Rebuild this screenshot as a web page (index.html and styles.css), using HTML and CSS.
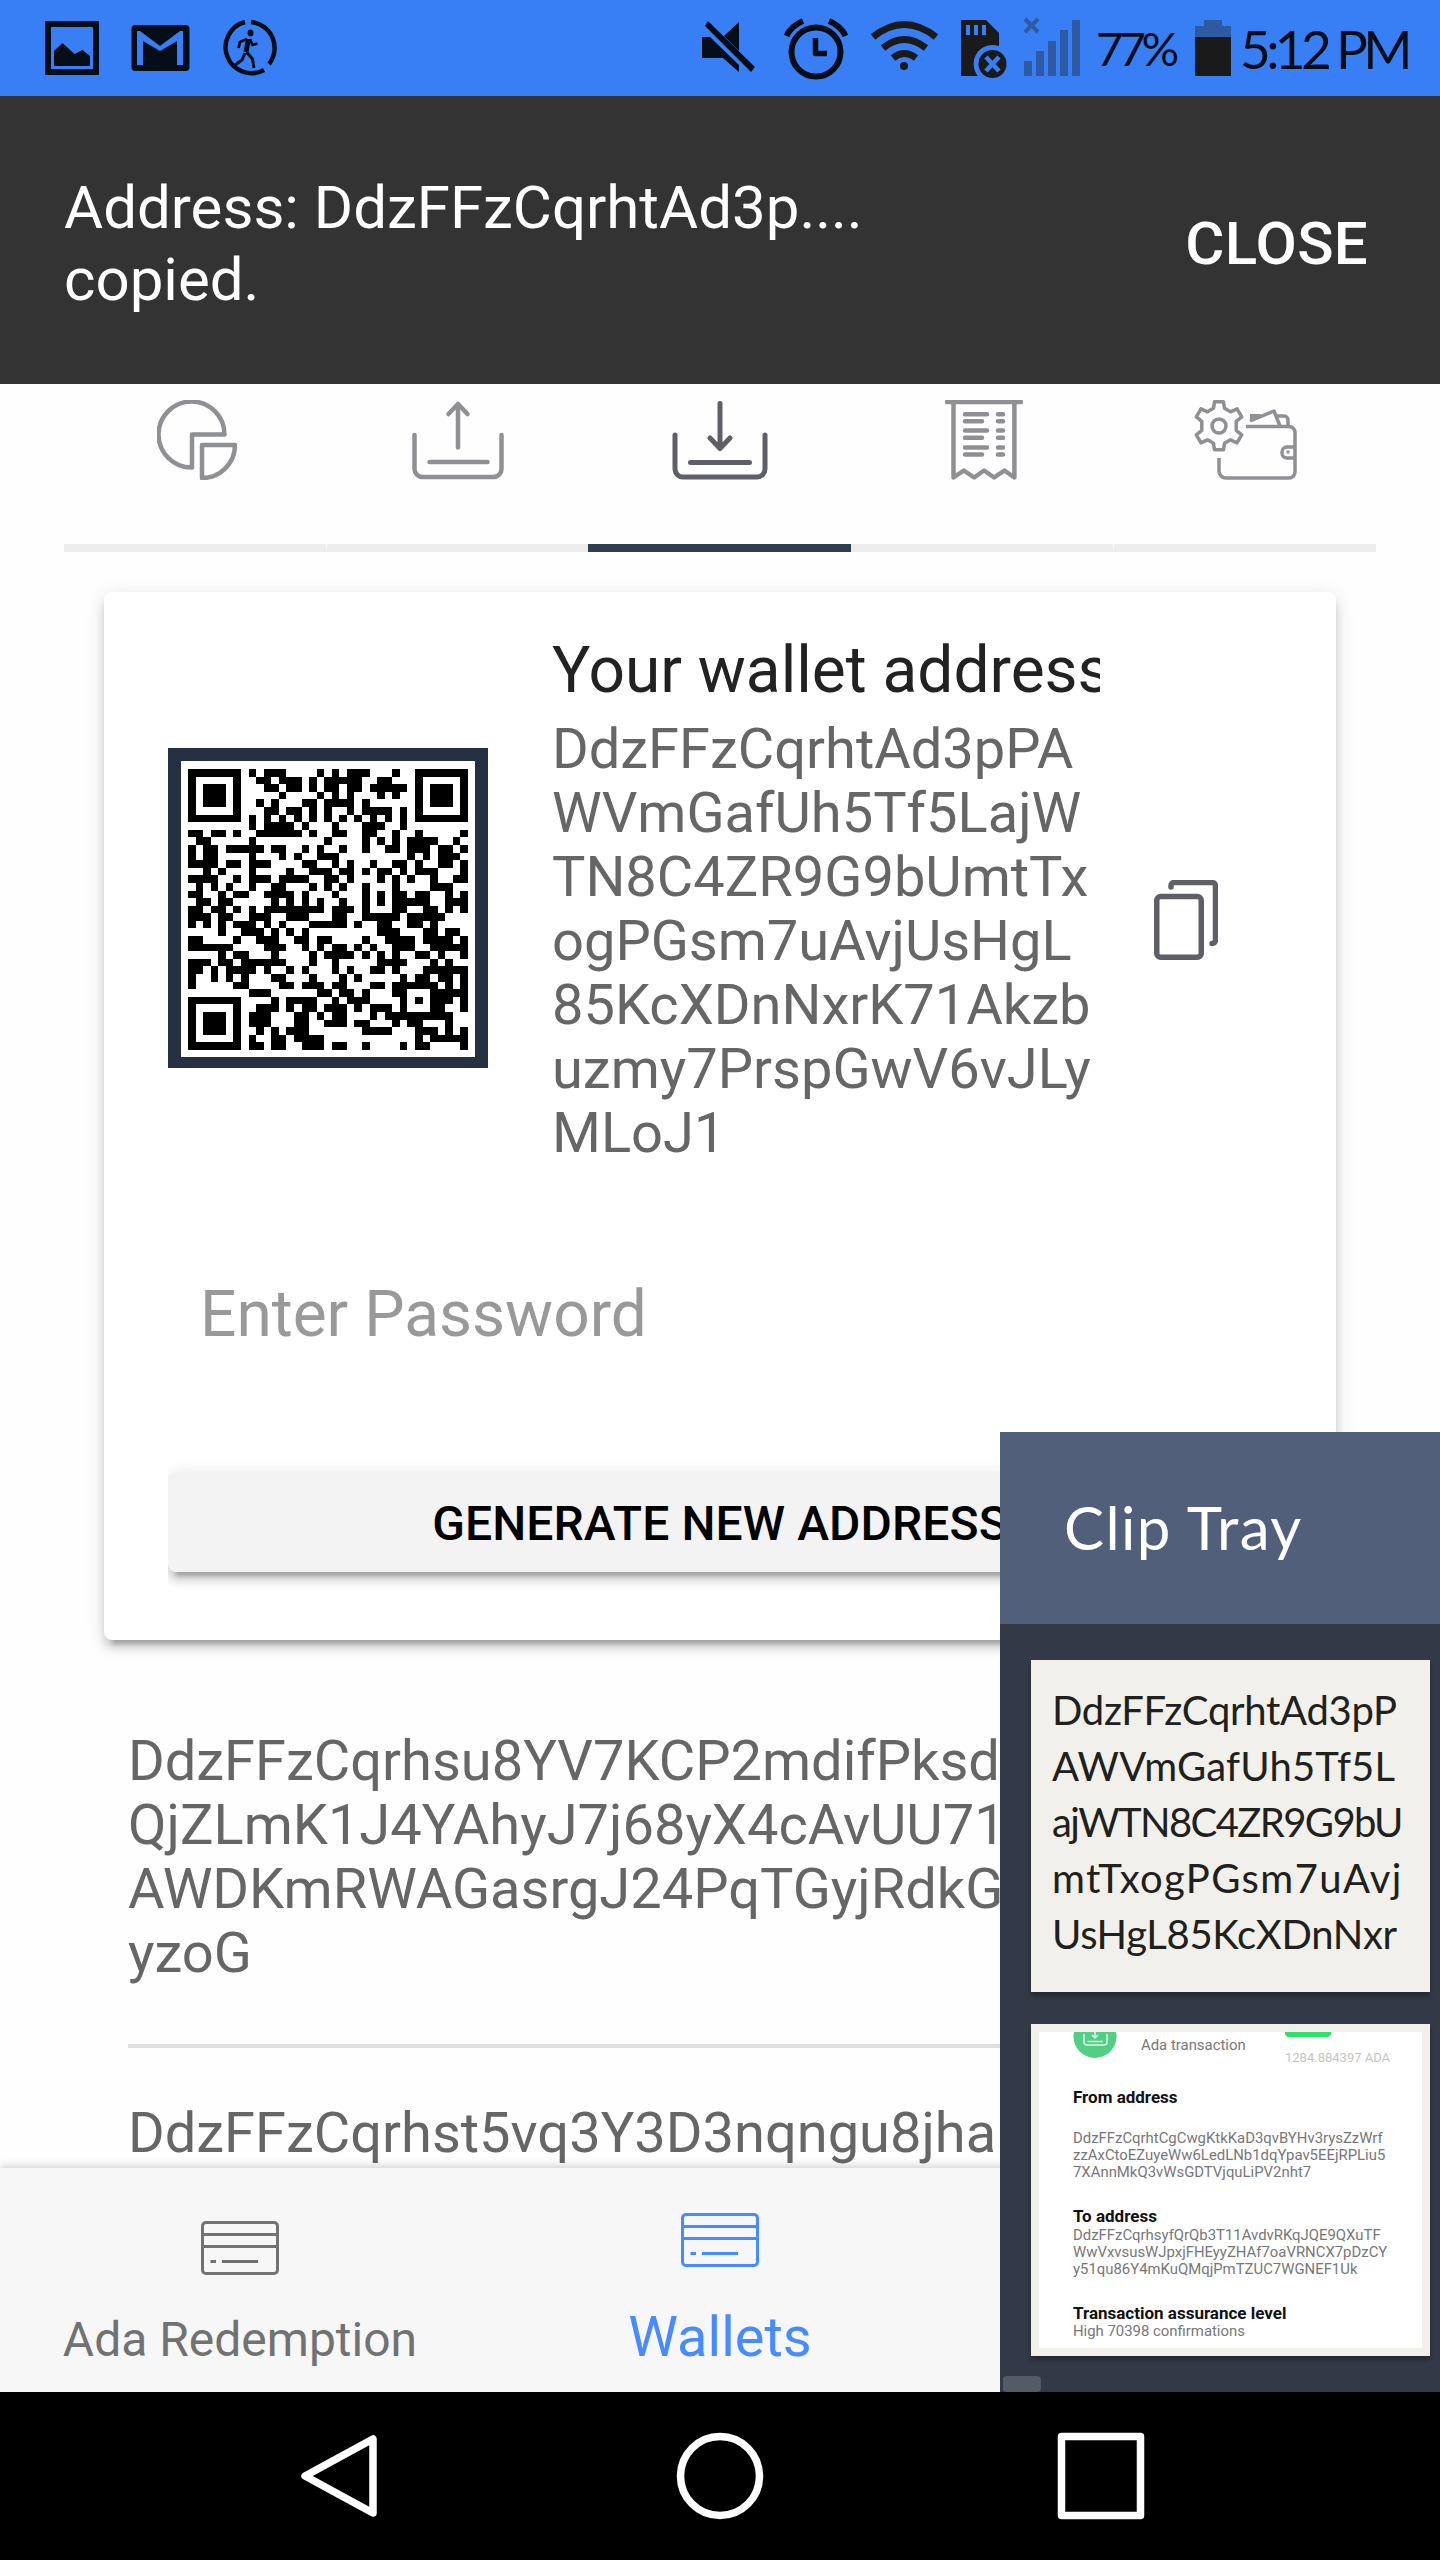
FILE: index.html
```html
<!DOCTYPE html>
<html lang="en">
<head>
<meta charset="utf-8">
<title>Wallet address</title>
<link rel="stylesheet" href="styles.css">
</head>
<body>
<div class="phone">
  <header class="status">
    <svg class="notices" viewBox="0 0 218 96" width="218" height="96">
      <path d="M45 21h54v54H45z M51 27v42h42V27z" fill-rule="evenodd"/>
      <path d="M54 51l8.500-8 12 11 8-4 7.500 6v10H54z"/>
      <path d="M135.500 25h50a4 4 0 0 1 4 4v38a4 4 0 0 1-4 4h-50a4 4 0 0 1-4-4V29a4 4 0 0 1 4-4z"/>
      <path class="cut" d="M137 65V31l3 0 20 15 20-15 3 0v34h-6V41L160 51 143 41v24z"/>
    </svg>
    <svg class="runner" viewBox="0 0 60 60" width="60" height="60">
      <path class="line" d="M33 4A26 26 0 0 1 51 46M46 52A26 26 0 1 1 27 4" stroke-width="4.500"/>
      <ellipse cx="32.500" cy="15" rx="3" ry="3.500"/>
      <path class="line" d="M29 21l-7 3-1.500 6M32 21l2.500 6 5-1.500" stroke-width="2.800"/>
      <path class="line" d="M30.500 21l-2.500 13" stroke-width="5"/>
      <path class="line" d="M28.500 34l6 7 1.500 9M27 35l-3 7-7 5" stroke-width="3"/>
    </svg>
    <svg class="system" viewBox="700 0 384 96" width="384" height="96">
      <path d="M739 22v29L724 36z"/>
      <path d="M702 37h8l29 35-16-14h-21z"/>
      <path d="M708 21l47 46-4 5L705 26zM702 37h8l29 28v7L724 58h-22z"/>
      <circle class="line" cx="816" cy="52" r="24.500" stroke-width="6"/>
      <path class="line" d="M815.500 38v15.500H827" stroke-width="5.500"/>
      <path class="line" d="M786.500 36Q791 26 803 21M845.500 36Q841 26 829 21" stroke-width="6"/>
      <g class="wifi">
        <path d="M873 37Q904 12 936 37M883 48Q904 31 926 48M893 58Q904 49 916 58"/>
        <circle cx="904" cy="66" r="4"/>
      </g>
      <g class="soft">
        <path d="M961 20h25l13 13v13A19 19 0 0 0 978 76H961z"/>
        <circle cx="992.500" cy="64" r="14"/>
      </g>
      <path class="cutline" d="M968 25v10M976 25v10M984 25v10" stroke-width="4"/>
      <path class="cutline" d="M986 57l13 14M999 57l-13 14" stroke-width="4.500"/>
      <path class="dim" d="M1024 61h8v15h-8zM1036 51h8v25h-8zM1048 41h8v35h-8zM1060 30h8v46h-8zM1072 20h8v56h-8z"/>
      <path class="dimline" d="M1025 19l13 13M1038 19l-13 13"/>
    </svg>
    <span class="percent">77%</span>
    <svg class="battery" viewBox="0 0 36 56" width="36" height="56">
      <path class="dim" d="M9 0h18v6h9v12H0V6h9z"/>
      <path class="soft" d="M0 17h36v39H0z"/>
    </svg>
    <span class="time">5:12 PM</span>
  </header>

  <div class="toast">
    <p class="toast-text">Address: DdzFFzCqrhtAd3p....<br>copied.</p>
    <span class="toast-close">CLOSE</span>
  </div>

  <main class="content">
    <nav class="tabs">
      <div class="tab">
        <svg class="nudge" viewBox="0 0 80 80" width="80" height="80"><path d="M67.500 34.500A33 33 0 1 0 35 67.500V34.500zM45 45h33A33 33 0 0 1 45 78z"/></svg>
      </div>
      <div class="tab">
        <svg viewBox="0 0 92 80" width="92" height="80"><path d="M2.500 35v34a8 8 0 0 0 8 8h71a8 8 0 0 0 8-8V35M17.500 62h58M46 47.500V5M36.500 14L46 4l9.500 10"/></svg>
      </div>
      <div class="tab active">
        <svg viewBox="0 0 96 80" width="96" height="80"><path d="M3 35v34a8 8 0 0 0 8 8h74a8 8 0 0 0 8-8V35M18.500 62.500h59M48 3.500V48M38 38l10 10.500 10-10.500"/></svg>
      </div>
      <div class="tab">
        <svg class="nudge" viewBox="0 0 78 80" width="78" height="80"><path d="M2 2h74M8.500 2v75.500l10.300-7 10.300 7 10-7 10 7 10.300-7 10 7V2"/><path d="M20 14.200h22M20 21.300h17M20 30.500h22M20 37.700h17M20 47.500h22M20 54.500h17M53 14.200h5M53 21.300h5M53 30.500h5M53 37.700h5M53 47.500h5M53 54.500h5"/></svg>
      </div>
      <div class="tab">
        <svg class="thin" viewBox="0 0 104 80" width="104" height="80"><path d="M21.500 1.800h9l1 6.500 6 3.500 6.500-3 4.700 8-5.500 4.500v9l5.500 4.500-4.700 8-6.500-3-6 3.500-1 6.500h-9l-1-6.500-6-3.500-6.500 3-4.700-8 5.500-4.500v-9L3.300 16.800l4.700-8 6.500 3 6-3.500z"/><circle cx="26" cy="26" r="7"/><path d="M53 26.500H96a6 6 0 0 1 6 6V72a6 6 0 0 1-6 6H33a7 7 0 0 1-7-7V58M57 21l24-10 6 15M82 16h9a4 4 0 0 1 4 4v6M102 47h-8a5 5 0 0 0-5 5v1a5 5 0 0 0 5 5h8"/><path class="fill" d="M57 14h12l-12 7zM93.500 50.500h3v3h-3z"/></svg>
      </div>
    </nav>

    <section class="card">
      <div class="wallet">
        <div class="qr"><svg viewBox="0 0 37 37" width="280" height="281" preserveAspectRatio="none" shape-rendering="crispEdges"><path id="qr-modules"/></svg></div>
        <div class="wallet-text">
          <h2 class="wallet-title">Your wallet address</h2>
          <p class="address">DdzFFzCqrhtAd3pPA<br>WVmGafUh5Tf5LajW<br>TN8C4ZR9G9bUmtTx<br>ogPGsm7uAvjUsHgL<br>85KcXDnNxrK71Akzb<br>uzmy7PrspGwV6vJLy<br>MLoJ1</p>
        </div>
        <svg class="copy" viewBox="0 0 64 80" width="64" height="80"><rect x="2.750" y="16.500" width="44.500" height="60.750" rx="4"/><path d="M17 7V5.500a3 3 0 0 1 3-3h38a3.500 3.500 0 0 1 3.500 3.500v54a3.500 3.500 0 0 1-3.500 3.500"/></svg>
      </div>
      <div class="password">Enter Password</div>
      <div class="button-row"><div class="button">GENERATE NEW ADDRESS</div></div>
    </section>

    <div class="list">
      <p class="address item">DdzFFzCqrhsu8YV7KCP2mdifPksd<br>QjZLmK1J4YAhyJ7j68yX4cAvUU71<br>AWDKmRWAGasrgJ24PqTGyjRdkG<br>yzoG</p>
      <p class="address item">DdzFFzCqrhst5vq3Y3D3nqngu8jha</p>
    </div>
  </main>

  <footer class="bottom">
    <div class="bottom-tab">
      <svg viewBox="0 0 78 54" width="78" height="54"><path d="M5 1.500h68a3.500 3.500 0 0 1 3.500 3.500v44a3.500 3.500 0 0 1-3.500 3.500H5A3.500 3.500 0 0 1 1.500 49V5A3.500 3.500 0 0 1 5 1.500zM1.500 13.500h75M1.500 25.500h75M9.500 40.500h5.500M21 40.500h36"/></svg>
      <span>Ada Redemption</span>
    </div>
    <div class="bottom-tab selected">
      <svg viewBox="0 0 78 54" width="78" height="54"><path d="M5 1.500h68a3.500 3.500 0 0 1 3.500 3.500v44a3.500 3.500 0 0 1-3.500 3.500H5A3.500 3.500 0 0 1 1.500 49V5A3.500 3.500 0 0 1 5 1.500zM1.500 13.500h75M1.500 25.500h75M9.500 40.500h5.500M21 40.500h36"/></svg>
      <span>Wallets</span>
    </div>
  </footer>

  <div class="android">
    <svg viewBox="0 0 78 88" width="78" height="88"><path d="M73 7v74L5 44z"/></svg>
    <svg class="home" viewBox="0 0 88 88" width="88" height="88"><circle cx="44" cy="44" r="39.500"/></svg>
    <svg viewBox="0 0 88 88" width="88" height="88"><rect x="4.500" y="4.500" width="79" height="79"/></svg>
  </div>

  <aside class="tray">
    <div class="tray-head">Clip Tray</div>
    <div class="tray-body">
      <div class="clip note"><span class="n1">DdzFFzCqrhtAd3pP</span><span class="n2">AWVmGafUh5Tf5L</span><span class="n3">ajWTN8C4ZR9G9bU</span><span class="n4">mtTxogPGsm7uAvj</span><span class="n5">UsHgL85KcXDnNxr</span></div>
      <div class="clip shot">
        <div class="shot-top">
          <svg viewBox="0 0 44 26" width="44" height="26"><circle cx="22" cy="4.500" r="21.500"/><path d="M11 2v8q0 3 3 3h17q3 0 3-3V2M14.500 9.500h15M22 0v6M19 3l3 3 3-3"/></svg>
          <span class="kind">Ada transaction</span>
          <div class="amount"><i class="pill"></i><span>1284.884397 ADA</span></div>
        </div>
        <h3>From address</h3>
        <p class="from">DdzFFzCqrhtCgCwgKtkKaD3qvBYHv3rysZzWrf<br>zzAxCtoEZuyeWw6LedLNb1dqYpav5EEjRPLiu5<br>7XAnnMkQ3vWsGDTVjquLiPV2nht7</p>
        <h3>To address</h3>
        <p class="to">DdzFFzCqrhsyfQrQb3T11AvdvRKqJQE9QXuTF<br>WwVxvsusWJpxjFHEyyZHAf7oaVRNCX7pDzCY<br>y51qu86Y4mKuQMqjPmTZUC7WGNEF1Uk</p>
        <h3>Transaction assurance level</h3>
        <p class="level">High 70398 confirmations</p>
      </div>
      <i class="handle"></i>
    </div>
  </aside>
</div>
<script src="script.js"></script>
</body>
</html>
```
FILE: styles.css
```css
* { box-sizing: border-box; }
body { margin: 0; background: #fefefe; font-family: Roboto, "Liberation Sans", sans-serif; }
h2, h3, p { margin: 0; font-weight: 400; }
svg { display: block; flex: none; }
.phone { position: relative; width: 1440px; height: 2560px; display: flex; flex-direction: column; overflow: hidden; }

/* status bar */
.status { flex: none; height: 96px; display: flex; background: #387ff5; fill: #050d18; color: #050d18; font-family: Lato, "Noto Sans", sans-serif; white-space: nowrap; }
.runner { margin-top: 18px; }
.system { margin-left: 422px; }
.line { fill: none; stroke: #050d18; stroke-linejoin: round; }
.cut { fill: #387ff5; }
.cutline { fill: none; stroke: #387ff5; }
.wifi path { fill: none; stroke: #1a1a1a; stroke-width: 7px; }
.wifi circle, .soft { fill: #1a1a1a; }
.dim { fill: #2d5aa3; }
.dimline { fill: none; stroke: #2d5aa3; stroke-width: 4px; }
.percent { width: 99px; margin-left: 12px; font-size: 47px; line-height: 97px; letter-spacing: -4.500px; }
.battery { margin-top: 20px; }
.time { margin-left: 9px; font-size: 53px; line-height: 98px; letter-spacing: -4.600px; }

/* toast */
.toast { flex: none; height: 288px; padding: 7px 72px 0 64px; display: flex; align-items: center; justify-content: space-between; background: #333; color: #fff; font-size: 60px; line-height: 72px; }
.toast-close { font-weight: 500; letter-spacing: .3px; }

/* wallet page */
.content { flex: none; height: 1784px; overflow: hidden; }
.tabs { height: 168px; padding: 0 64px; display: flex; }
.tab { flex: 1; padding-top: 16px; display: flex; justify-content: center; border-bottom: 8px solid #ededed; }
.tab + .tab:not(.active) { border-left: 1px solid #fefefe; }
.tab.active + .tab { border-left: 0; }
.tab svg { fill: none; stroke: #8f9094; stroke-width: 4.500px; stroke-linecap: round; stroke-linejoin: round; }
.tab svg.thin { stroke-width: 3.500px; stroke-linecap: butt; }
.tab svg.nudge { margin-left: 3px; }
.tab .fill { fill: #8f9094; stroke: none; }
.tab.active { border-color: #303d50; margin: 0 -1px; padding: 16px 1px 0; }
.tab.active svg { stroke: #5f6067; stroke-width: 5px; }

.card { height: 1048px; margin: 40px 104px 0; padding: 0 64px; background: #fff; border-radius: 8px; box-shadow: 0 8px 8px rgba(0,0,0,.14), 0 12px 4px -8px rgba(0,0,0,.2), 0 4px 20px rgba(0,0,0,.12); }
.wallet { height: 691px; display: flex; align-items: flex-start; }
.qr { width: 320px; height: 320px; margin-top: 156px; display: flex; align-items: center; justify-content: center; background: #fff; border: 13px solid #253142; border-bottom-width: 11px; }
.wallet-text { width: 548px; margin: 47px 54px 0 64px; overflow: hidden; white-space: nowrap; }
.wallet-title { margin-bottom: 14px; color: #222; font-size: 64px; line-height: 64px; }
.address { color: #666; font-size: 56px; line-height: 64px; white-space: nowrap; }
.copy { margin-top: 288px; fill: none; stroke: #5f6067; stroke-width: 5.500px; stroke-linecap: round; }
.password { height: 149px; padding-left: 32px; color: #999; font-size: 64px; line-height: 64px; }
.button-row { height: 180px; padding: 40px 0; overflow: hidden; }
.button { height: 100px; padding-top: 3px; background: #f3f3f3; border-radius: 8px; box-shadow: 0 8px 8px rgba(0,0,0,.14), 0 12px 4px -8px rgba(0,0,0,.2), 0 4px 20px rgba(0,0,0,.12); color: #000; font-size: 48px; font-weight: 500; line-height: 97px; letter-spacing: .1px; text-align: center; }

.list { padding: 89px 0 0 128px; }
.item { height: 319px; margin-bottom: 53px; border-bottom: 4px solid #dedede; }

/* bottom navigation */
.bottom { flex: none; height: 224px; display: flex; position: relative; background: #f7f7f7; box-shadow: 0 -2px 8px rgba(0,0,0,.18); }
.bottom-tab { width: 480px; padding-top: 53px; display: flex; flex-direction: column; align-items: center; gap: 37px; color: #727272; font-size: 48px; line-height: 56px; }
.bottom-tab svg { fill: none; stroke: currentColor; stroke-width: 3px; }
.bottom-tab.selected { padding-top: 45px; gap: 42px; color: #488aff; font-size: 56px; }

.android { flex: none; height: 168px; padding: 0 295px 0 300px; display: flex; align-items: center; justify-content: space-between; background: #000; }
.android svg { fill: none; stroke: #fff; stroke-width: 7.500px; stroke-linejoin: round; }
.android svg.home { margin-left: 5px; }

/* clip tray, drawn over the page */
.tray { position: absolute; left: 1000px; top: 1432px; width: 440px; height: 960px; display: flex; flex-direction: column; background: #333946; }
.tray-head { height: 192px; padding-left: 64px; background: #515f7a; color: #fff; font-family: Lato, "Noto Sans", sans-serif; font-size: 60px; line-height: 191px; letter-spacing: 1.400px; }
.tray-body { flex: 1; padding: 36px 10px 0 31px; display: flex; flex-direction: column; }
.clip { flex: none; height: 332px; margin-bottom: 32px; background: #f1f0eb; box-shadow: 0 4px 4px rgba(0,0,0,.3); }
.note { padding: 22px 0 0 21px; display: flex; flex-direction: column; color: #20201d; font-family: Lato, "Noto Sans", sans-serif; font-size: 40px; line-height: 56px; white-space: nowrap; }
.n1, .n5 { letter-spacing: -.3px; }
.n2 { letter-spacing: .2px; }
.n3 { letter-spacing: -1.600px; }
.n4 { letter-spacing: 1.400px; }
.shot { height: 332px; margin-bottom: 20px; border: 8px solid #f1f0eb; padding-left: 34px; background: #fff; color: #777; font-size: 14.900px; line-height: 17px; white-space: nowrap; overflow: hidden; }
.shot-top { height: 55px; display: flex; }
.shot-top svg { fill: #52cf85; }
.shot-top svg path { fill: none; stroke: #d9f8e4; stroke-width: 1.500px; }
.kind { width: 144px; padding: 5px 0 0 24px; }
.amount { margin-left: 24px; color: #c5c5c5; font-size: 13px; }
.pill { display: block; width: 46px; height: 5px; margin-bottom: 12px; background: #2fe069; border-radius: 0 0 4px 4px; }
.shot h3 { color: #111; font-size: 17px; font-weight: 700; line-height: 20px; }
.from { margin: 23px 0 25px; }
.to { margin: 1px 0 25px; }
.handle { width: 38px; height: 16px; margin-left: -28px; background: #555b66; border-radius: 4px; }
```
FILE: script.js
```js
// Dark modules of the QR code, row by row, as column runs.
const rows = [
  "0-6 8 10-12 17 19 21-23 27 30-36",
  "0 6 9-10 12-14 16 18-22 25-26 30 36",
  "0 2-4 6 10-11 13-14 16 18-19 21-22 24-28 30 32-34 36",
  "0 2-4 6 12 17 19 21 25 27 30 32-34 36",
  "0 2-4 6 9 11 15-16 18-21 23 30 32-34 36",
  "0 6 10-11 13-14 16 18 21 23-26 28 30 36",
  "0-6 8 10 12 14 16 18 20 22 24 26 28 30-36",
  "8 10-13 15 19 23-25 28",
  "0-1 3-4 6 9-14 16 19-20 23-24 27 30 36",
  "1-2 8 18 23 25 27 29-32 35",
  "0 2-3 5-9 11-12 15 17 20 23 26-27 29-31 33-34 36",
  "0 2-3 8 12 14 17-19 29 31 33-35",
  "0-3 5-6 8-10 15-16 19 21 24 27-28 30 33-34 36",
  "2 4 8 13 16-18 20-21 23 25-26 28 30-32 36",
  "0-3 6 8-10 12-15 18-19 21 25 27 29 32 35-36",
  "1 3 5 8 11-12 16 18 20 23 27 32-34",
  "0-1 4 6-7 10-13 15 19 23 25 27-28 30-31 34 36",
  "1-2 4-5 11 13 15 17 20 23 25 27-31 34-36",
  "0-1 3-4 6 8 10-17 19-21 23 27-28 31-32 34 36",
  "0-2 4-5 8-10 13-15 19-20 23-27 29-33",
  "0 2 4 6-8 10 12 16-20 22 25-26 29-30 32",
  "4 7-9 11 13 15 25-27 31-32 34-35",
  "0-1 6 9-11 14-15 17-18 23 26-29 31-34 36",
  "0-5 10-12 15 17 19-20 22 24 27-29 32-36",
  "4 6-7 11 16 18-21 23 25 27 30-31 33 36",
  "0-2 4-5 7-12 16 19 25-28 32 34",
  "0-1 3 5-8 10 13 15 19 21 24-25 27 31-36",
  "0 3 5 7 11-12 16 20 22 28 30-31 33-34 36",
  "0 6-7 12-13 15-17 19-20 24-25 27-32 34 36",
  "8-10 17-18 20-21 23 27-28 32-36",
  "0-6 11 13-16 19 21-23 28 30 32-34 36",
  "0 6 9-11 13 15-16 18-20 22 24-26 28 32-33 36",
  "0 2-4 6 8-10 14-15 17 19-20 24 26-34",
  "0 2-4 6 8-10 14-15 18-20 22-23 27 29-30 34",
  "0 2-4 6 9 11 13-15 23-26 30-32 34 36",
  "0 6 8 11-12 14-17 30 32-36",
  "0-6 8-9 11-12 15-17 19-20 23 28 30-31 36"
];
const path = rows.map((row, y) => row.split(" ").map(run => {
  const [from, to = from] = run.split("-").map(Number);
  return `M${from} ${y}h${to - from + 1}v1H${from}z`;
}).join("")).join("");
document.getElementById("qr-modules").setAttribute("d", path);
```
